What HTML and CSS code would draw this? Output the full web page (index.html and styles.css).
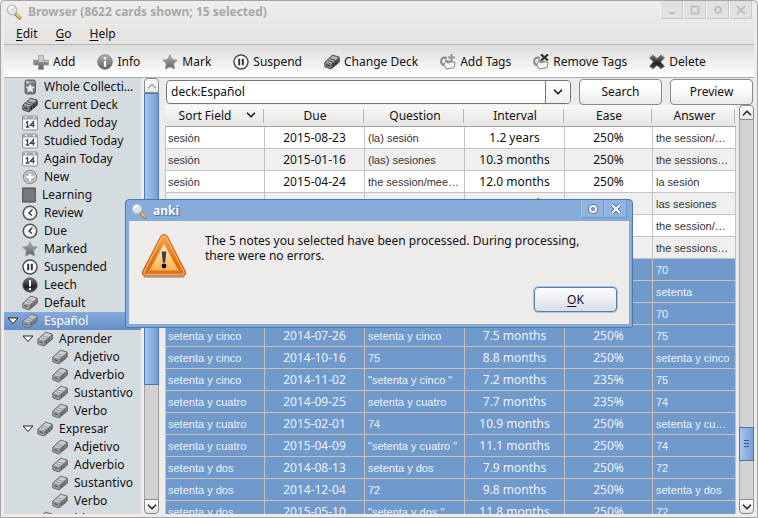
FILE: index.html
```html
<!DOCTYPE html>
<html lang="en">
<head>
<meta charset="utf-8">
<title>Browser</title>
<link rel="stylesheet" href="styles.css">
</head>
<body>
<svg class="defs" aria-hidden="true">
  <defs>
    <linearGradient id="grey" x1="0" y1="0" x2="0" y2="1"><stop offset="0" stop-color="#b4b4b4"/><stop offset="1" stop-color="#5e5e5e"/></linearGradient>
    <linearGradient id="dark" x1="0" y1="0" x2="0" y2="1"><stop offset="0" stop-color="#777"/><stop offset=".6" stop-color="#222"/><stop offset="1" stop-color="#555"/></linearGradient>
    <linearGradient id="orange" x1="0" y1="0" x2="0" y2="1"><stop offset="0" stop-color="#f9a64c"/><stop offset=".75" stop-color="#e06a06"/><stop offset="1" stop-color="#d97c35"/></linearGradient>
    <linearGradient id="peach" x1="0" y1="0" x2="0" y2="1"><stop offset="0" stop-color="#fff0cf"/><stop offset="1" stop-color="#fdb14f"/></linearGradient>
    <symbol id="lens" viewBox="0 0 16 16"><path d="M9.500 10l4.300 4" stroke="#a87c3c" stroke-width="3.200" stroke-linecap="round"/><path d="M10.500 10.500l3.200 3" stroke="#f3c067" stroke-width="1.800" stroke-linecap="round"/><circle cx="6" cy="6" r="4.800" fill="#dbe4e8" stroke="#b3b9bb" stroke-width="1.200"/><path d="M3 6a3 3 0 0 1 4-3" stroke="#fff" stroke-width="2" fill="none"/></symbol>
    <symbol id="plus" viewBox="0 0 16 16"><path d="M5.500 1.500h5v4.500h5v5h-5v4.500h-5V11h-5V6h5z" fill="url(#grey)" stroke="#999" stroke-width=".7"/><path d="M6 2h4v4.500h5v1.500H6z" fill="#ddd" opacity=".7"/></symbol>
    <symbol id="info" viewBox="0 0 16 16"><circle cx="8" cy="8" r="7.300" fill="url(#grey)" stroke="#777" stroke-width=".8"/><path d="M8 3.300v2.200M8 7v5.700" stroke="#fff" stroke-width="2.200"/></symbol>
    <symbol id="star" viewBox="0 0 16 16"><path d="M8 .8l2.200 4.500 5 .8-3.500 3.600.8 5.300L8 12.800 3.500 15l.8-5.300L.8 6.100l5-.8z" fill="url(#grey)" stroke="#999" stroke-width=".8"/></symbol>
    <symbol id="pause" viewBox="0 0 16 16"><circle cx="8" cy="8" r="7" fill="#fff" stroke="#4d4d4d" stroke-width="1.500"/><path d="M6.200 4.800v6.400M9.800 4.800v6.400" stroke="#333" stroke-width="2"/></symbol>
    <symbol id="deck" viewBox="0 0 16 16"><path d="M.8 8.200L8.500 1.200l6.700 1.900.2 4.900-8.400 7L.8 12.800z" fill="#7d7d7d" stroke="#555" stroke-width=".8"/><path d="M1.500 8.200L8.700 1.800l5.900 1.700-7.200 6.300z" fill="#d0d0d0"/><path d="M4 6.700l5 1.400M6 4.900l5.200 1.400" stroke="#8a8a8a" stroke-width=".8"/><path d="M1.200 8.600l6 1.500v4.400l-6-2z" fill="#9c9c9c"/><path d="M2.300 10.700l3.300 1" stroke="#444" stroke-width="1"/><path d="M9.500 9.200v3.700M12 7.200v3.700" stroke="#555" stroke-width=".8"/></symbol>
    <symbol id="deckdark" viewBox="0 0 16 16"><path d="M.8 8.200L8.500 1.200l6.700 1.900.2 4.900-8.400 7L.8 12.800z" fill="#555" stroke="#333" stroke-width=".8"/><path d="M1.500 8.200L8.700 1.800l5.900 1.700-7.200 6.300z" fill="#b5b5b5"/><path d="M4 6.700l5 1.400M6 4.900l5.200 1.400" stroke="#4a4a4a"/><path d="M1.200 8.600l6 1.500v4.400l-6-2z" fill="#808080"/><path d="M2.300 10.700l3.300 1" stroke="#222"/><path d="M9.500 9.200v3.700M12 7.200v3.700" stroke="#222"/></symbol>
    <symbol id="tag" viewBox="0 0 16 16"><path d="M7 4C3 2.700.8 5 1.200 8c.4 2.200 1.800 3.300 3.800 3.200" fill="none" stroke="#8f8f8f" stroke-width="2.200"/><path d="M6 6.500l6.300 1 2.700 1.200-.9 5-8 1.300L3.800 11z" fill="#f5f5f5" stroke="#858585"/><path d="M5.500 5.500l2.200 3.200 4.300-1.200" fill="none" stroke="#858585" stroke-width="1.300"/></symbol>
    <symbol id="tagadd" viewBox="0 0 16 16"><use href="#tag"/><path d="M11.500 0v7M8 3.500h7" stroke="#999" stroke-width="2.200"/></symbol>
    <symbol id="tagdel" viewBox="0 0 16 16"><use href="#tag"/><path d="M8 .5l7 6M15 .5l-7 6" stroke="#333" stroke-width="2.300"/></symbol>
    <symbol id="cross" viewBox="0 0 16 16"><path d="M4 1l4 3.600L12 1l3.500 2.800L11.600 8l3.900 4.200L12 15l-4-3.600L4 15 .5 12.200 4.400 8 .5 3.800z" fill="url(#dark)" stroke="#666" stroke-width=".5"/></symbol>
    <symbol id="whole" viewBox="0 0 16 16"><rect x="3" y="1" width="10.500" height="14" rx="2" fill="#777" stroke="#666"/><path d="M4 3h8.500" stroke="#bbb"/><path d="M8.200 4.500l1.500 2.900 3.200.4-2.300 2.300.5 3.400-2.900-1.500-2.900 1.500.5-3.400-2.300-2.300 3.200-.4z" fill="#e9e9e9"/><circle cx="5.500" cy="3.500" r="1.200" fill="#ddd"/></symbol>
    <symbol id="calendar" viewBox="0 0 16 16"><rect x=".6" y="1" width="14.800" height="14" rx="1" fill="#fafafa" stroke="#8d8d8d"/><path d="M1 3h14" stroke="#a5a5a5" stroke-width="3"/><path d="M3 2.500h2M11 2.500h2" stroke="#eee" stroke-width="1.500"/><path d="M3.800 7.700l1.700-1v5.500M3.800 12h3.500M11.300 12.500V6.700L8.300 10.300h4.500" fill="none" stroke="#444" stroke-width="1.300"/></symbol>
    <symbol id="new" viewBox="0 0 16 16"><circle cx="8" cy="8" r="6.700" fill="#b0b0b0" stroke="#858585"/><circle cx="8" cy="8" r="5.700" fill="none" stroke="#ddd" stroke-width=".8"/><path d="M8 4v8M4 8h8" stroke="#fff" stroke-width="2.400"/></symbol>
    <symbol id="book" viewBox="0 0 14 16"><rect x=".7" y="1" width="12.600" height="14" fill="#777" stroke="#4b4b4b"/><path d="M5 4h5M6 7h4M5 11h5" stroke="#828282"/></symbol>
    <symbol id="clock" viewBox="0 0 16 16"><circle cx="8" cy="8" r="6.800" fill="#fff" stroke="#555" stroke-width="1.500"/><circle cx="8" cy="8" r="5.300" fill="none" stroke="#ccc" stroke-width=".8"/><path d="M10.500 4.500L7 8l3 2.500" fill="none" stroke="#333" stroke-width="1.400"/></symbol>
    <symbol id="leech" viewBox="0 0 16 16"><circle cx="8" cy="8" r="7.200" fill="url(#dark)" stroke="#555" stroke-width=".8"/><path d="M8 3v6.500M8 11v2" stroke="#fff" stroke-width="2"/></symbol>
    <symbol id="down" viewBox="0 0 12 8"><path d="M1 1h10L6 6.500z" fill="#fff" stroke="#222"/></symbol>
    <symbol id="chev" viewBox="0 0 10 6"><path d="M1 .8l4 4 4-4" fill="none" stroke="currentColor" stroke-width="1.500"/></symbol>
  </defs>
</svg>
<div class="window">
  <header class="chrome">
    <div class="titlebar">
      <svg class="icon"><use href="#lens"/></svg>
      <h1 class="title">Browser (8622 cards shown; 15 selected)</h1>
      <div class="winbuttons">
        <button class="winbtn" aria-label="Minimize"><svg viewBox="0 0 10 10"><path d="M2 8h6" /></svg></button>
        <button class="winbtn" aria-label="Maximize"><svg viewBox="0 0 10 10"><path d="M1.500 1.500h7v7h-7z"/></svg></button>
        <button class="winbtn" aria-label="Shade"><svg viewBox="0 0 10 10"><circle cx="5" cy="5" r="3"/></svg></button>
        <button class="winbtn" aria-label="Close"><svg viewBox="0 0 10 10"><path d="M1 1l8 8M9 1L1 9"/></svg></button>
      </div>
    </div>
    <nav class="menubar">
      <button class="menu"><u>E</u>dit</button>
      <button class="menu"><u>G</u>o</button>
      <button class="menu"><u>H</u>elp</button>
    </nav>
  </header>
  <div class="toolbar">
    <button class="tool"><svg class="icon"><use href="#plus"/></svg>Add</button>
    <button class="tool"><svg class="icon"><use href="#info"/></svg>Info</button>
    <button class="tool"><svg class="icon"><use href="#star"/></svg>Mark</button>
    <button class="tool"><svg class="icon"><use href="#pause"/></svg>Suspend</button>
    <button class="tool"><svg class="icon"><use href="#deckdark"/></svg>Change Deck</button>
    <button class="tool"><svg class="icon"><use href="#tagadd"/></svg>Add Tags</button>
    <button class="tool"><svg class="icon"><use href="#tagdel"/></svg>Remove Tags</button>
    <button class="tool"><svg class="icon"><use href="#cross"/></svg>Delete</button>
  </div>
  <div class="body">
    <aside class="side">
      <ul class="tree">
        <li class="node"><svg class="icon"><use href="#whole"/></svg><span class="name">Whole Collection</span></li>
        <li class="node"><svg class="icon"><use href="#deckdark"/></svg>Current Deck</li>
        <li class="node"><svg class="icon"><use href="#calendar"/></svg>Added Today</li>
        <li class="node"><svg class="icon"><use href="#calendar"/></svg>Studied Today</li>
        <li class="node"><svg class="icon"><use href="#calendar"/></svg>Again Today</li>
        <li class="node"><svg class="icon"><use href="#new"/></svg>New</li>
        <li class="node"><svg class="icon narrow"><use href="#book"/></svg>Learning</li>
        <li class="node"><svg class="icon"><use href="#clock"/></svg>Review</li>
        <li class="node"><svg class="icon"><use href="#clock"/></svg>Due</li>
        <li class="node"><svg class="icon"><use href="#star"/></svg>Marked</li>
        <li class="node"><svg class="icon"><use href="#pause"/></svg>Suspended</li>
        <li class="node"><svg class="icon"><use href="#leech"/></svg>Leech</li>
        <li class="node"><svg class="icon"><use href="#deck"/></svg>Default</li>
        <li class="node open current"><svg class="twist"><use href="#down"/></svg><svg class="icon tinted"><use href="#deck"/></svg>Español</li>
        <li class="node open child"><svg class="twist"><use href="#down"/></svg><svg class="icon"><use href="#deck"/></svg>Aprender</li>
        <li class="node leaf"><svg class="icon"><use href="#deck"/></svg>Adjetivo</li>
        <li class="node leaf"><svg class="icon"><use href="#deck"/></svg>Adverbio</li>
        <li class="node leaf"><svg class="icon"><use href="#deck"/></svg>Sustantivo</li>
        <li class="node leaf"><svg class="icon"><use href="#deck"/></svg>Verbo</li>
        <li class="node open child"><svg class="twist"><use href="#down"/></svg><svg class="icon"><use href="#deck"/></svg>Expresar</li>
        <li class="node leaf"><svg class="icon"><use href="#deck"/></svg>Adjetivo</li>
        <li class="node leaf"><svg class="icon"><use href="#deck"/></svg>Adverbio</li>
        <li class="node leaf"><svg class="icon"><use href="#deck"/></svg>Sustantivo</li>
        <li class="node leaf"><svg class="icon"><use href="#deck"/></svg>Verbo</li>
        <li class="node child"><svg class="icon spaced"><use href="#deck"/></svg>Hablar</li>
      </ul>
      <div class="scroll sidescroll">
        <button class="arrow faded" aria-label="Scroll up"><svg class="chev up"><use href="#chev"/></svg></button>
        <div class="groove"><div class="handle"></div></div>
        <button class="arrow" aria-label="Scroll down"><svg class="chev"><use href="#chev"/></svg></button>
      </div>
    </aside>
    <main class="main">
      <form class="search">
        <div class="combo">
          <input class="query" type="text" value="deck:Español" aria-label="Search query">
          <button class="drop" type="button" aria-label="Search history"><svg class="chev"><use href="#chev"/></svg></button>
        </div>
        <button class="push" type="button">Search</button>
        <button class="push" type="button">Preview</button>
      </form>
      <div class="results">
        <div class="listing">
          <table class="cards">
            <colgroup><col class="c1"><col class="c1"><col class="c1"><col class="c1"><col class="c3"><col></colgroup>
            <thead><tr><th class="sorted"><span>Sort Field</span><svg class="chev"><use href="#chev"/></svg></th><th>Due</th><th>Question</th><th>Interval</th><th>Ease</th><th>Answer</th></tr></thead>
            <tbody>
              <tr><td>sesión</td><td>2015-08-23</td><td>(la) sesión</td><td>1.2 years</td><td>250%</td><td>the session/…</td></tr>
              <tr><td>sesión</td><td>2015-01-16</td><td>(las) sesiones</td><td>10.3 months</td><td>250%</td><td>the sessions…</td></tr>
              <tr><td>sesión</td><td>2015-04-24</td><td>the session/mee…</td><td>12.0 months</td><td>250%</td><td>la sesión</td></tr>
              <tr><td>sesión</td><td></td><td></td><td>10.3 months</td><td></td><td>las sesiones</td></tr>
              <tr><td></td><td></td><td></td><td></td><td></td><td>the session/…</td></tr>
              <tr><td></td><td></td><td></td><td></td><td></td><td>the sessions…</td></tr>
              <tr class="sel"><td></td><td></td><td></td><td></td><td></td><td>70</td></tr>
              <tr class="sel"><td></td><td></td><td></td><td></td><td></td><td>setenta</td></tr>
              <tr class="sel"><td></td><td></td><td></td><td></td><td></td><td>70</td></tr>
              <tr class="sel"><td>setenta y cinco</td><td>2014-07-26</td><td>setenta y cinco</td><td>7.5 months</td><td>250%</td><td>75</td></tr>
              <tr class="sel"><td>setenta y cinco</td><td>2014-10-16</td><td>75</td><td>8.8 months</td><td>250%</td><td>setenta y cinco</td></tr>
              <tr class="sel"><td>setenta y cinco</td><td>2014-11-02</td><td>"setenta y cinco "</td><td>7.2 months</td><td>235%</td><td>75</td></tr>
              <tr class="sel"><td>setenta y cuatro</td><td>2014-09-25</td><td>setenta y cuatro</td><td>7.7 months</td><td>235%</td><td>74</td></tr>
              <tr class="sel"><td>setenta y cuatro</td><td>2015-02-01</td><td>74</td><td>10.9 months</td><td>250%</td><td>setenta y cu…</td></tr>
              <tr class="sel"><td>setenta y cuatro</td><td>2015-04-09</td><td>"setenta y cuatro "</td><td>11.1 months</td><td>250%</td><td>74</td></tr>
              <tr class="sel"><td>setenta y dos</td><td>2014-08-13</td><td>setenta y dos</td><td>7.9 months</td><td>250%</td><td>72</td></tr>
              <tr class="sel"><td>setenta y dos</td><td>2014-12-04</td><td>72</td><td>9.8 months</td><td>250%</td><td>setenta y dos</td></tr>
              <tr class="sel"><td>setenta y dos</td><td>2015-05-10</td><td>"setenta y dos "</td><td>11.8 months</td><td>250%</td><td>72</td></tr>
            </tbody>
          </table>
        </div>
        <div class="scroll listscroll">
          <button class="arrow" aria-label="Scroll up"><svg class="chev up"><use href="#chev"/></svg></button>
          <div class="groove"><div class="handle grip"></div></div>
          <button class="arrow" aria-label="Scroll down"><svg class="chev"><use href="#chev"/></svg></button>
        </div>
      </div>
    </main>
  </div>
  <section class="dialog" role="dialog" aria-labelledby="dlg-title">
    <div class="dlgbar">
      <svg class="icon"><use href="#lens"/></svg>
      <h2 class="dlgtitle" id="dlg-title">anki</h2>
      <div class="winbuttons">
        <button class="winbtn blue" aria-label="Shade"><svg viewBox="0 0 10 10"><circle class="edge" cx="5" cy="5" r="3"/><circle cx="5" cy="5" r="3"/></svg></button>
        <button class="winbtn blue" aria-label="Close"><svg viewBox="0 0 10 10"><path class="edge" d="M1 1l8 8M9 1L1 9"/><path d="M1 1l8 8M9 1L1 9"/></svg></button>
      </div>
    </div>
    <div class="dlgbody">
      <div class="message">
        <svg class="warn" viewBox="0 0 46 46"><path d="M4 43.500h38" stroke="#999" stroke-width="3" stroke-linecap="round" opacity=".6"/><path d="M23 1.500c1.700 0 2.800 1 3.700 2.600l17.500 34c1.300 2.700.2 4.900-2.700 4.900h-37c-2.900 0-4-2.200-2.700-4.900l17.500-34C20.200 2.500 21.300 1.500 23 1.500z" fill="url(#orange)" stroke="#c4621b"/><path d="M23 3c1.200 0 1.900.8 2.500 1.900l17.300 34c.8 1.800.1 2.900-1.600 2.900H4.800c-1.700 0-2.400-1.100-1.600-2.900l17.300-34C21.100 3.800 21.800 3 23 3z" fill="none" stroke="#fbbf80"/><path d="M23 11l14.500 26.500h-29z" fill="url(#peach)"/><path d="M20.700 18.500h4.600l-1.100 11h-2.400z" fill="#3c3c3c"/><circle cx="23" cy="33" r="2.400" fill="#111"/></svg>
        <p class="text">The 5 notes you selected have been processed. During processing, there were no errors.</p>
      </div>
      <button class="ok"><u>O</u>K</button>
    </div>
  </section>
</div>
</body>
</html>
```
FILE: styles.css
```css
* { box-sizing: border-box; }
body { margin: 0; background: #edecea; color: #111; font: 12px/18px "Noto Sans", sans-serif; }
button, input { font: inherit; color: inherit; padding: 0; margin: 0; border: 0; background: none; }
h1, h2, p, ul { margin: 0; padding: 0; font-size: 12px; }
u { text-underline-offset: 2px; }
.defs { position: absolute; width: 0; height: 0; }
.icon { width: 16px; height: 16px; flex: none; }
.narrow { width: 14px; }
.tinted { opacity: .75; }
.chev { width: 10px; height: 6px; flex: none; display: block; }
.up { transform: rotate(180deg); }

.window { position: relative; display: flex; flex-direction: column; height: 100vh; padding: 0 3px 3px; border: 1px solid #a5a4a2; border-radius: 5px 5px 0 0; overflow: hidden; background: #edecea; }
.chrome { background: linear-gradient(#efeeed, #e4e3e0); border-bottom: 1px solid #bab8b3; flex: none; }
.titlebar { display: flex; align-items: center; height: 22px; padding-left: 2px; gap: 6px; }
.title { flex: 1; color: #a9a8a6; font-weight: bold; }
.winbuttons { display: flex; align-self: flex-start; padding-right: 2px; }
.winbtn { display: grid; place-items: center; width: 23px; height: 18px; border: 1px solid #cbcac9; border-top: 0; border-left-color: #f3f3f3; background: #e2e1e0; }
.winbtn svg { width: 10px; height: 10px; fill: none; stroke: #c2c1c0; stroke-width: 2; }
.menubar { display: flex; align-items: center; height: 21px; padding-left: 12px; gap: 18px; }
.toolbar { display: flex; flex: none; align-items: center; gap: 22px; height: 33px; padding: 2px 0 0 29px; background: linear-gradient(#dddcdc, #fff); border-bottom: 1px solid #aaa9a6; }
.tool { display: flex; align-items: center; gap: 4px; white-space: nowrap; }

.body { display: flex; flex: 1; min-height: 0; gap: 6px; }
.side { display: flex; gap: 3px; width: 155px; flex: none; }
.tree { flex: 1; min-width: 0; list-style: none; overflow: hidden; background: #d5dce0; }
.node { display: flex; align-items: center; gap: 6px; height: 18px; padding-left: 18px; padding-right: 5px; white-space: nowrap; }
.name { overflow: hidden; text-overflow: ellipsis; }
.open { padding-left: 3px; }
.twist { width: 12px; height: 8px; flex: none; margin-right: -3px; }
.child { padding-left: 33px; }
.open.child { padding-left: 18px; }
.leaf { padding-left: 48px; }
.current { background: linear-gradient(#86a9d9, #668fc6); color: #fff; }

.scroll { display: flex; flex-direction: column; flex: none; width: 15px; }
.arrow { display: grid; place-items: center; height: 15px; flex: none; border: 1px solid #8b8987; border-radius: 4px 4px 0 0; background: linear-gradient(#fff, #e5e4e2); color: #222; }
.arrow:last-child { border-radius: 0 0 4px 4px; }
.faded { color: #aaa; }
.groove { display: flex; flex-direction: column; flex: 1; background: #d3d2d0; border: solid #a3a19f; border-width: 0 1px; }
.handle { flex: 0 0 72%; margin: 0 -1px; border: 1px solid #4c78b0; background: linear-gradient(90deg, #a8c5ed, #769fd6); }
.listscroll .groove::before { content: ""; flex: 0 0 81%; }
.grip { flex: none; height: 34px; padding: 12px 4px; }
.grip::before { content: ""; display: block; height: 7px; background: repeating-linear-gradient(#35598c 0 1px, transparent 1px 3px); }

.main { display: flex; flex-direction: column; flex: 1; min-width: 0; padding-top: 1px; }
.search { display: flex; gap: 8px; height: 26px; flex: none; padding: 0 1px; }
.combo { display: flex; flex: 1; height: 24px; margin-top: 1px; border: 1px solid #777573; border-radius: 4px; background: #fff; overflow: hidden; }
.query { flex: 1; min-width: 0; padding: 0 4px; outline: 0; }
.drop { display: grid; place-items: center; width: 25px; border-left: 1px solid #777573; background: linear-gradient(#fff, #eee); }
.push { width: 83px; border: 1px solid #8b8987; border-radius: 4px; background: linear-gradient(#fff 30%, #eae9e7); }
.results { display: flex; flex: 1; min-height: 0; gap: 3px; }
.listing { flex: 1; min-width: 0; overflow: hidden; }
.cards { width: 100%; table-layout: fixed; border-collapse: separate; border-spacing: 0; }
.c1 { width: 100px; }
.c3 { width: 88px; }
.cards th { position: relative; height: 22px; padding: 0; font-weight: normal; line-height: 16px; background: linear-gradient(#f9f9f8, #e6e5e3); border-bottom: 1px solid #a3a19f; }
.cards th::after { content: ""; position: absolute; right: 1px; top: 4px; bottom: 3px; border-right: 1px solid #b5b4b2; }
.sorted span { padding-right: 20px; }
.sorted .chev { position: absolute; right: 9px; top: 7px; }
.cards td { height: 22px; padding: 0 4px 0 3px; border-right: 1px solid #c5c3c1; border-bottom: 1px solid #c5c3c1; background: #fff; font: 11px/16px "Liberation Sans", sans-serif; color: #333; white-space: nowrap; overflow: hidden; text-overflow: ellipsis; }
.cards td:first-child { padding-left: 2px; border-left: 1px solid #c5c3c1; }
.cards tr:nth-child(even) td { background: #efefef; }
.cards td:nth-child(2), .cards td:nth-child(4), .cards td:nth-child(5) { padding: 0; text-align: center; font: 12px/16px "Noto Sans", sans-serif; color: #111; }
.cards tbody tr.sel td { background: #7099cc; color: #eef3fa; border-color: #c9c1b9; }

.dialog { position: absolute; left: 124px; top: 198px; width: 508px; padding: 0 3px 3px; border: 1px solid #5078a9; border-radius: 4px 4px 2px 2px; background: #86abd9; }
.dlgbar { display: flex; align-items: center; height: 21px; gap: 6px; padding-left: 2px; }
.dlgtitle { flex: 1; color: #fff; text-shadow: 1px 1px 1px #45699a; }
.blue { border-color: #6f97ca; border-left-color: #a5c2e8; background: #91b3df; }
.blue svg { stroke: #fff; }
.blue .edge { stroke: #4a6fa1; stroke-width: 4; }
.dlgbody { display: flex; flex-direction: column; align-items: flex-end; justify-content: space-between; height: 103px; padding: 12px 12px; background: #edecea; }
.message { display: flex; align-self: stretch; gap: 18px; height: 46px; }
.warn { width: 46px; height: 46px; flex: none; }
.text { width: 400px; line-height: 15px; }
.ok { width: 83px; height: 25px; border: 1px solid #5f7ca2; border-radius: 4px; background: linear-gradient(#fcfdff, #d9dde5); box-shadow: 0 0 0 1px #a9c4e8; }
```
